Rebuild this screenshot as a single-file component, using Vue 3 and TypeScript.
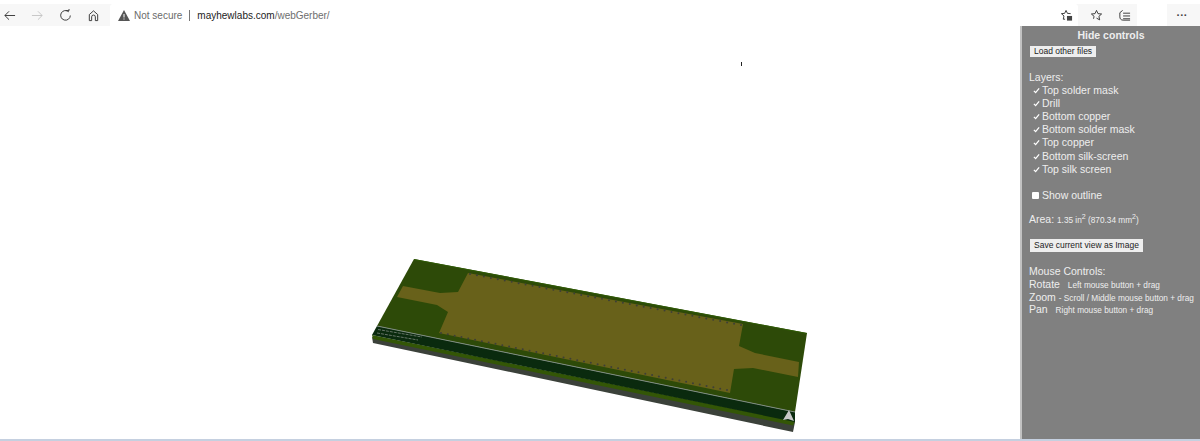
<script setup lang="ts">
  interface Point { x: number, y: number }

  function row (from: Point, to: Point, count: number): Point[] {
    const points: Point[] = []
    for (let i = 0; i < count; i++) {
      const t = i / (count - 1)
      points.push({ x: from.x + (to.x - from.x) * t, y: from.y + (to.y - from.y) * t })
    }
    return points
  }

  const vias = [
    ...row({ x: 470, y: 274 }, { x: 741, y: 325 }, 40),
    ...row({ x: 441, y: 333 }, { x: 727, y: 390 }, 43),
  ]

  const layers = [
    'Top solder mask',
    'Drill',
    'Bottom copper',
    'Bottom solder mask',
    'Top copper',
    'Bottom silk-screen',
    'Top silk screen',
  ]
</script>

<template>
  <div class="window">
    <header class="toolbar">
      <div class="nav">
        <svg class="icon" viewBox="0 0 14 14"><path d="M13 7H2M6.500 2.500 2 7l4.500 4.500" /></svg>
        <svg class="icon faded" viewBox="0 0 14 14"><path d="M1 7h11M7.500 2.500 12 7l-4.500 4.500" /></svg>
        <svg class="icon" viewBox="0 0 14 14"><path d="M10.500 3A5.200 5.200 0 1 0 12.200 7M7.500 1.800h3.300V.0" /></svg>
        <svg class="icon" viewBox="0 0 14 14"><path d="M2.500 12.500V6L7 2l4.500 4v6.500H9V8.500a2 2 0 0 0-4 0v4Z" /></svg>
      </div>
      <div class="address">
        <svg class="warn" viewBox="0 0 12 11"><path d="M6 0 12 11H0Z" /><path class="mark" d="M6 4v3.500M6 8.500v1" /></svg>
        <span class="insecure">Not secure</span>
        <span class="divider" />
        <span class="url">mayhewlabs.com<span class="path">/webGerber/</span></span>
        <svg class="icon favorite" viewBox="0 0 14 14"><path d="M5.500 11H3.500l.8-3.500L1.500 5l3.500-.3L6.500 1.500 8 4.700l3.500.3" /><rect class="fill" x="7.500" y="7.500" width="5.500" height="5" /></svg>
      </div>
      <div class="actions">
        <svg class="icon" viewBox="0 0 14 14"><path d="M7 1.500 8.600 5l3.900.4-2.900 2.500.8 3.800L7 9.800" /><path d="M7 1.500 5.400 5l-3.900.4 2.900 2.500-.6 2.600" /></svg>
        <svg class="icon" viewBox="0 0 14 14"><path d="M5.500 4.500H13M5.500 7.500H13M5.500 10.500H13M5 1.500 2 4v4.500c0 2 1.200 3.500 3.500 3.500H13" /></svg>
        <span class="profile" />
        <span class="more">···</span>
      </div>
    </header>

    <main class="page">
      <section class="viewport">
        <svg class="board" viewBox="0 0 1020 413">
          <g transform="translate(0 -26)">
            <!-- side of the board, then the bottom copper strip -->
            <polygon fill="#3b413a" points="372,337 795,422 793,432 373,343" />
            <polygon fill="#335606" points="372,335 795,421 793,425.500 373,339" />
            <polygon fill="#2d4a08" points="414,259 807,333 795,412 377,326" />
            <polyline fill="none" stroke="#2f5a06" stroke-width="1" points="414,259.500 807,333.500" />
            <polygon fill="#0a2a0e" points="377,326 795,412 795,422 372,335" />
            <polyline fill="none" stroke="#7f8c80" stroke-width="1" points="377,326 795,412" />
            <polygon
              fill="#68611a"
              points="468,273 743,324 739,346 755,353 799,362 798,377 753,368 734,369 730,393 439,333 448,312 437,305 397,297 403,286 440,293 458,292"
            />
            <circle
              v-for="(via, i) in vias"
              :key="i"
              :cx="via.x"
              :cy="via.y"
              r="1"
              fill="#3e3f38"
            />
            <polyline fill="none" stroke="#6f7c6f" stroke-width="0.900" stroke-dasharray="3 1" points="378,329.500 422,337" />
            <polyline fill="none" stroke="#6f7c6f" stroke-width="0.900" stroke-dasharray="3 1" points="377,333 418,340" />
            <polygon fill="#c8c8c8" points="783,420 789,410 794,421 788,419" />
          </g>
        </svg>
        <span class="cursor" />
      </section>

      <aside class="controls">
        <h1 class="title">Hide controls</h1>
        <button class="btn" type="button">Load other files</button>

        <p class="heading">Layers:</p>
        <ul class="layers">
          <li v-for="layer in layers" :key="layer" class="layer">
            <svg class="check" viewBox="0 0 8 8"><path d="M1 4.500 3 6.500 7 1.500" /></svg>
            {{ layer }}
          </li>
        </ul>

        <label class="outline"><span class="box" />Show outline</label>

        <p class="area">Area: <small>1.35 in<sup>2</sup> (870.34 mm<sup>2</sup>)</small></p>

        <button class="btn save" type="button">Save current view as Image</button>

        <p class="heading mouse">Mouse Controls:</p>
        <p class="hint">Rotate <small class="gap">Left mouse button + drag</small></p>
        <p class="hint">Zoom <small>- Scroll / Middle mouse button + drag</small></p>
        <p class="hint">Pan <small class="gap">Right mouse button + drag</small></p>
      </aside>
    </main>

    <footer class="strip" />
  </div>
</template>

<style>
  html, body {
    margin: 0;
    background: #fff;
  }
</style>

<style scoped>
  .window {
    display: flex;
    flex-direction: column;
    width: 1200px;
    height: 441px;
    overflow: hidden;
    font-family: "Liberation Sans", Arial, sans-serif;
  }

  .toolbar {
    display: flex;
    align-items: center;
    height: 22px;
    margin-top: 4px;
    background: #f7f7f7;
  }

  .nav {
    display: flex;
    align-items: center;
    gap: 15px;
    width: 110px;
    padding-left: 3px;
    box-sizing: border-box;
  }

  .icon {
    flex: none;
    width: 13px;
    height: 13px;
    fill: none;
    stroke: #333;
    stroke-width: 1;
  }

  .icon .fill {
    fill: #444;
    stroke: none;
  }

  .faded {
    stroke: #c4c4c4;
  }

  .address {
    display: flex;
    align-items: center;
    width: 968px;
    height: 22px;
    padding: 0 5.500px 0 8px;
    box-sizing: border-box;
    background: #fff;
    border-radius: 3px 3px 0 0;
    font-size: 10px;
  }

  .favorite {
    margin-left: auto;
  }

  .warn {
    width: 12px;
    height: 11px;
    fill: #555;
  }

  .warn .mark {
    stroke: #fff;
    fill: none;
  }

  .insecure {
    margin-left: 4px;
    color: #6b6b6b;
  }

  .divider {
    width: 1px;
    height: 11px;
    margin: 0 7px;
    background: #777;
  }

  .url {
    color: #222;
  }

  .path {
    color: #6e6e6e;
  }

  .actions {
    display: flex;
    align-items: center;
    flex: 1;
    padding-left: 11.500px;
    gap: 15px;
  }

  .profile {
    width: 30px;
    height: 22px;
    margin-left: -8.500px;
    background: #fff;
  }

  .more {
    margin-left: -5.500px;
    font-size: 11px;
    font-weight: bold;
    color: #444;
  }

  .page {
    display: flex;
    height: 413px;
  }

  .viewport {
    position: relative;
    flex: 1;
  }

  .board {
    display: block;
    width: 1020px;
    height: 413px;
  }

  .cursor {
    position: absolute;
    left: 741px;
    top: 36px;
    width: 1px;
    height: 4px;
    background: #222;
  }

  .controls {
    width: 180px;
    padding: 3px 0 0 8px;
    box-sizing: border-box;
    background: #808080;
    border-left: 2px solid #c2c2c2;
    color: #eee;
    font-size: 10.500px;
    line-height: 13px;
    white-space: nowrap;
  }

  .title {
    margin: 0 0 4px -8px;
    font-size: 10.500px;
    line-height: 13px;
    font-weight: bold;
    text-align: center;
  }

  .btn {
    display: block;
    height: 11px;
    padding: 0 4px;
    background: #eee;
    border: 0;
    color: #222;
    font: 8.500px/11px "Liberation Sans", Arial, sans-serif;
  }

  .heading {
    margin: 14px 0 0 -1px;
  }

  .layers {
    margin: 0;
    padding: 0 0 0 3px;
    list-style: none;
  }

  .layer {
    display: flex;
    align-items: center;
    gap: 2px;
    height: 13.100px;
  }

  .check {
    width: 7px;
    height: 7px;
    fill: none;
    stroke: #fff;
    stroke-width: 1.400;
  }

  .outline {
    display: flex;
    align-items: center;
    gap: 3px;
    margin: 13.400px 0 0 2px;
  }

  .box {
    width: 7px;
    height: 7px;
    background: #fff;
    border-radius: 1px;
  }

  .area {
    margin: 11px 0 0 -1px;
  }

  small {
    font-size: 8.250px;
  }

  .gap {
    margin-left: 5px;
  }

  sup {
    font-size: 7px;
    line-height: 0;
  }

  .save {
    height: 13px;
    margin-top: 12px;
    padding: 0 4px;
    line-height: 13px;
  }

  .mouse {
    margin-top: 13px;
  }

  .hint {
    height: 12.500px;
    margin: 0 0 0 -1px;
    line-height: 12.500px;
  }

  .strip {
    flex: 1;
    background: #c5d0e0;
  }
</style>
